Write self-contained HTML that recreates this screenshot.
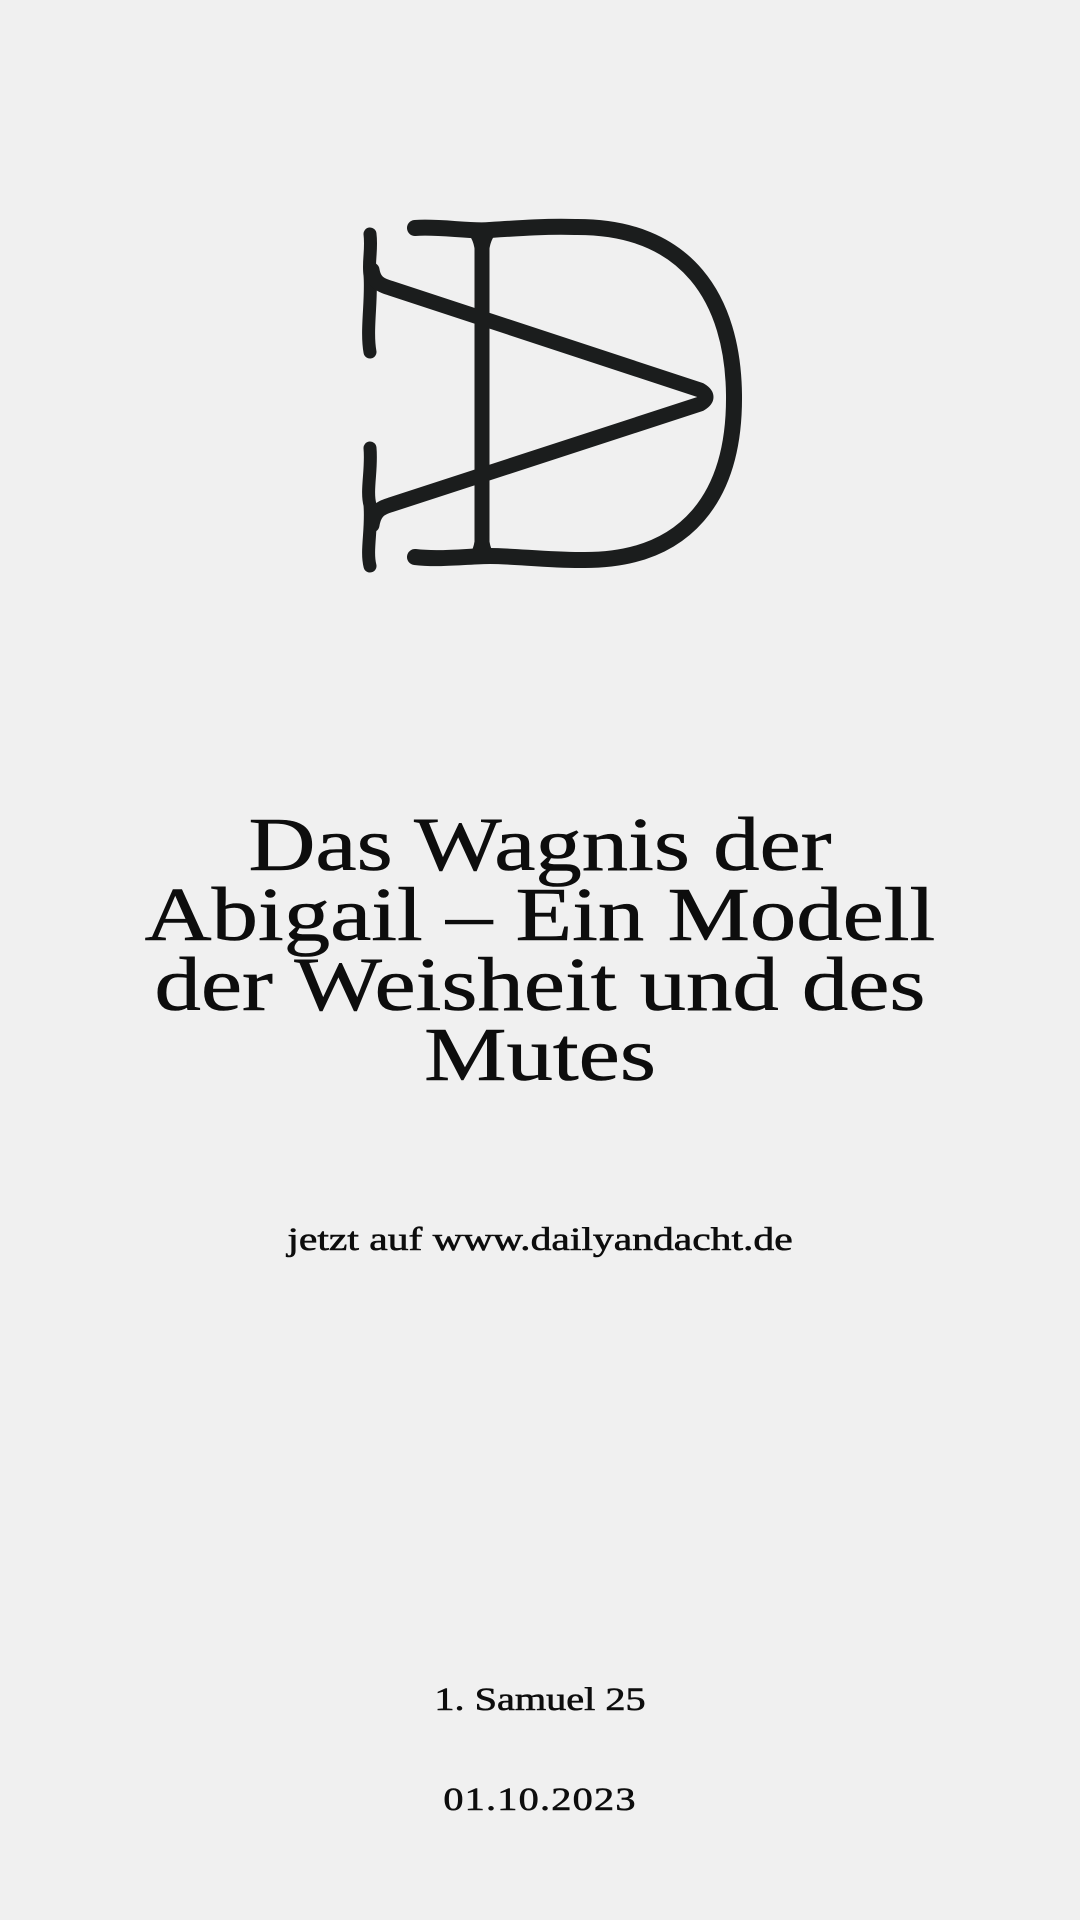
<!DOCTYPE html>
<html><head><meta charset="utf-8"><style>
html,body{margin:0;padding:0;}
body{width:1080px;height:1920px;background:#f0f0f0;position:relative;overflow:hidden;font-family:"Liberation Serif",serif;color:#0d0d0d;}
.t{position:absolute;left:0;width:1080px;text-align:center;transform:scaleX(1.22);transform-origin:540px 0;-webkit-text-stroke:0.6px #0d0d0d;}
#title{top:810px;font-size:76px;line-height:70px;}
#sub{top:1222px;font-size:33px;transform:scaleX(1.26);}
#ref{top:1682px;font-size:33px;}
#date{top:1782px;font-size:33px;letter-spacing:1px;}
</style></head><body>
<svg width="1080" height="1920" style="position:absolute;left:0;top:0" viewBox="0 0 1080 1920">
<g fill="none" stroke="#1b1d1d" stroke-linecap="round" stroke-linejoin="round">
<path d="M370 234 C372 250 368 262 370 275 C372 300 366 330 370 352" stroke-width="13"/>
<path d="M370 448 C372 470 366 490 370 505 C372 530 366 550 370 566" stroke-width="13"/>
<path d="M372 270 C374 282 380 285 390 288 L700 390 Q712 397 700 404 L390 505 C380 508 374 512 372 525" stroke-width="15"/>
<path d="M482 236 L482 552" stroke-width="15"/>
<path d="M415 228 C440 226 470 232 490 230 C520 228 550 226 575 227 C688 226 733 300 734 395 C735 495 688 562 580 560 C545 560 515 556 490 556 C470 556 440 560 415 557" stroke-width="16"/>
</g>
<path d="M466 232 Q476 240 475 260 L489 260 Q488 240 498 232 Z M466 558 Q476 550 475 530 L489 530 Q488 550 498 558 Z" fill="#1b1d1d"/>
</svg>
<div class="t" id="title">Das Wagnis der<br>Abigail – Ein Modell<br>der Weisheit und des<br>Mutes</div>
<div class="t" id="sub">jetzt auf www.dailyandacht.de</div>
<div class="t" id="ref">1. Samuel 25</div>
<div class="t" id="date">01.10.2023</div>
</body></html>
